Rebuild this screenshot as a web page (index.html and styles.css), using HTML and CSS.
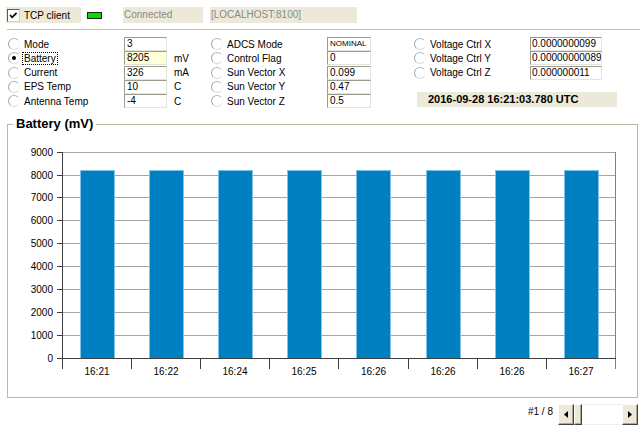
FILE: index.html
```html
<!DOCTYPE html>
<html>
<head>
<meta charset="utf-8">
<title>TCP client</title>
<link rel="stylesheet" href="styles.css">
</head>
<body>
<div class="topbar">
  <label class="chk-panel">
    <span class="chk"><svg width="11" height="11" viewBox="0 0 11 11"><polyline points="2,5 4.2,7.3 8.6,2.8" fill="none" stroke="#000" stroke-width="1.7"/></svg></span>
    <span class="chk-label">TCP client</span>
  </label>
  <span class="led"></span>
  <span class="status status-conn">Connected</span>
  <span class="status status-host">[LOCALHOST:8100]</span>
</div>
<div class="sep"></div>
<div class="fields">
  <div class="col col1">
    <div class="row"><span class="radio"></span><span class="lbl">Mode</span><span class="box w1">3</span></div>
    <div class="row"><span class="radio on"></span><span class="lbl"><span class="focus">Battery</span></span><span class="box w1 hl">8205</span><span class="unit">mV</span></div>
    <div class="row"><span class="radio"></span><span class="lbl">Current</span><span class="box w1">326</span><span class="unit">mA</span></div>
    <div class="row"><span class="radio"></span><span class="lbl">EPS Temp</span><span class="box w1">10</span><span class="unit">C</span></div>
    <div class="row"><span class="radio"></span><span class="lbl">Antenna Temp</span><span class="box w1">-4</span><span class="unit">C</span></div>
  </div>
  <div class="col col2">
    <div class="row"><span class="radio"></span><span class="lbl">ADCS Mode</span><span class="box w2 small">NOMINAL</span></div>
    <div class="row"><span class="radio"></span><span class="lbl">Control Flag</span><span class="box w2">0</span></div>
    <div class="row"><span class="radio"></span><span class="lbl">Sun Vector X</span><span class="box w2">0.099</span></div>
    <div class="row"><span class="radio"></span><span class="lbl">Sun Vector Y</span><span class="box w2">0.47</span></div>
    <div class="row"><span class="radio"></span><span class="lbl">Sun Vector Z</span><span class="box w2">0.5</span></div>
  </div>
  <div class="col col3">
    <div class="row"><span class="radio"></span><span class="lbl">Voltage Ctrl X</span><span class="box w3">0.0000000099</span></div>
    <div class="row"><span class="radio"></span><span class="lbl">Voltage Ctrl Y</span><span class="box w3">0.00000000089</span></div>
    <div class="row"><span class="radio"></span><span class="lbl">Voltage Ctrl Z</span><span class="box w3">0.000000011</span></div>
    <div class="stamp">2016-09-28 16:21:03.780 UTC</div>
  </div>
</div>
<fieldset class="group">
  <legend>Battery (mV)</legend>
  <svg class="chart" width="629" height="266" viewBox="8 131 629 266">
    <g class="grid">
      <line x1="62" y1="335.5" x2="616" y2="335.5"/>
      <line x1="62" y1="312.5" x2="616" y2="312.5"/>
      <line x1="62" y1="289.5" x2="616" y2="289.5"/>
      <line x1="62" y1="266.5" x2="616" y2="266.5"/>
      <line x1="62" y1="243.5" x2="616" y2="243.5"/>
      <line x1="62" y1="220.5" x2="616" y2="220.5"/>
      <line x1="62" y1="197.5" x2="616" y2="197.5"/>
      <line x1="62" y1="175.5" x2="616" y2="175.5"/>
      <line x1="62" y1="152.5" x2="616" y2="152.5"/>
    </g>
    <g class="bars">
      <rect x="80.5" y="170.5" width="34" height="188"/>
      <rect x="149.5" y="170.5" width="34" height="188"/>
      <rect x="218.5" y="170.5" width="34" height="188"/>
      <rect x="287.5" y="170.5" width="34" height="188"/>
      <rect x="356.5" y="170.5" width="34" height="188"/>
      <rect x="426.5" y="170.5" width="34" height="188"/>
      <rect x="495.5" y="170.5" width="34" height="188"/>
      <rect x="564.5" y="170.5" width="34" height="188"/>
    </g>
    <line class="edge" x1="615.5" y1="152" x2="615.5" y2="369"/>
    <g class="axis">
      <line x1="62.5" y1="152" x2="62.5" y2="369"/>
      <line x1="57" y1="358.5" x2="616" y2="358.5"/>
      <line x1="57" y1="335.5" x2="62" y2="335.5"/>
      <line x1="57" y1="312.5" x2="62" y2="312.5"/>
      <line x1="57" y1="289.5" x2="62" y2="289.5"/>
      <line x1="57" y1="266.5" x2="62" y2="266.5"/>
      <line x1="57" y1="243.5" x2="62" y2="243.5"/>
      <line x1="57" y1="220.5" x2="62" y2="220.5"/>
      <line x1="57" y1="197.5" x2="62" y2="197.5"/>
      <line x1="57" y1="175.5" x2="62" y2="175.5"/>
      <line x1="57" y1="152.5" x2="62" y2="152.5"/>
      <line x1="131.5" y1="358" x2="131.5" y2="369"/>
      <line x1="200.5" y1="358" x2="200.5" y2="369"/>
      <line x1="269.5" y1="358" x2="269.5" y2="369"/>
      <line x1="338.5" y1="358" x2="338.5" y2="369"/>
      <line x1="408.5" y1="358" x2="408.5" y2="369"/>
      <line x1="477.5" y1="358" x2="477.5" y2="369"/>
      <line x1="546.5" y1="358" x2="546.5" y2="369"/>
    </g>
    <g class="ylab">
      <text x="53" y="362">0</text>
      <text x="53" y="339">1000</text>
      <text x="53" y="316">2000</text>
      <text x="53" y="293">3000</text>
      <text x="53" y="270">4000</text>
      <text x="53" y="247">5000</text>
      <text x="53" y="224">6000</text>
      <text x="53" y="201">7000</text>
      <text x="53" y="179">8000</text>
      <text x="53" y="156">9000</text>
    </g>
    <g class="xlab">
      <text x="97" y="375">16:21</text>
      <text x="166" y="375">16:22</text>
      <text x="235" y="375">16:24</text>
      <text x="304" y="375">16:25</text>
      <text x="373.5" y="375">16:26</text>
      <text x="443" y="375">16:26</text>
      <text x="512" y="375">16:26</text>
      <text x="581" y="375">16:27</text>
    </g>
  </svg>
</fieldset>
<div class="footer">
  <span class="pager">#1 / 8</span>
  <div class="scroll">
    <span class="sbtn"><svg width="4" height="7" viewBox="0 0 4 7"><polygon points="4,0 0,3.5 4,7" fill="#000"/></svg></span>
    <span class="sbtn thumb"></span>
    <span class="track"></span>
    <span class="sbtn"><svg width="4" height="7" viewBox="0 0 4 7"><polygon points="0,0 4,3.5 0,7" fill="#000"/></svg></span>
  </div>
</div>
</body>
</html>
```
FILE: styles.css
```css
* { box-sizing: border-box; }
html, body { margin: 0; padding: 0; background: #fff; }
body {
  width: 640px;
  height: 429px;
  overflow: hidden;
  font-family: "Liberation Sans", Arial, sans-serif;
  font-size: 10px;
  color: #000;
}

/* top bar */
.topbar { display: flex; align-items: flex-start; height: 23px; padding: 7px 0 0 6px; }
.chk-panel { display: flex; align-items: center; width: 75px; height: 16px; background: #ECE9D8; padding-left: 1px; }
.chk {
  width: 13px; height: 13px; flex: none;
  border: 1px solid; border-color: #5a5a5a #d4d0c8 #d4d0c8 #5a5a5a;
  background: #fff; display: flex;
}
.chk svg { display: block; }
.chk-label { margin-left: 4px; }
.led { width: 15px; height: 7px; margin: 5px 0 0 6px; background: #00E000; border: 1px solid #1e1e1e; }
.status { height: 16px; line-height: 16px; background: #ECE9D8; color: #8a8a8a; padding-left: 1px; white-space: nowrap; }
.status-conn { width: 80px; margin-left: 21px; }
.status-host { width: 147px; margin-left: 7px; }
.sep { height: 1px; background: #c0c0c0; margin: 6px 0 0 7px; }

/* fields */
.fields { display: flex; height: 87px; padding: 7px 0 0 8px; }
.col { display: flex; flex-direction: column; }
.col1 { width: 203px; }
.col2 { width: 203px; }
.col3 { flex: 1; }
.row { display: flex; align-items: center; height: 14.25px; }
.radio {
  width: 12px; height: 12px; flex: none; margin-right: 4px;
  border-radius: 50%; border: 1px solid;
  border-color: #b4b4b4 #f6f6f6 #dcdcdc #a6a6a6;
  background: #fff;
  display: flex; align-items: center; justify-content: center;
}
.radio.on::after { content: ""; width: 4px; height: 4px; border-radius: 50%; background: #000; }
.lbl { width: 100px; white-space: nowrap; }
.focus { outline: 1px dotted #000; margin-left: -1px; padding: 0 1px; }
.box {
  height: 14px; line-height: 12px; padding: 0 2px;
  border: 1px solid; border-color: #9c9a8e #e6e4da #e6e4da #9c9a8e;
  background: #fff; white-space: nowrap; overflow: hidden;
}
.w1 { width: 43px; }
.w2 { width: 44px; }
.w3 { width: 72px; padding-left: 1px; }
.box.hl { background: #FFFFD9; }
.box.small { font-size: 8px; }
.unit { margin-left: 7px; }
.stamp {
  margin: 12px 0 0 3px; width: 200px; height: 15px; line-height: 15px;
  background: #ECE9D8; font-weight: bold; font-size: 11px; padding-left: 11px;
}

/* group box */
.group { margin: 0 2px 0 7px; padding: 0; border: 1px solid #bcb8a8; min-width: 0; }
.group legend { margin-left: 5px; padding: 0 3px; font-size: 13px; font-weight: bold; line-height: 14px; }
.chart { display: block; width: 629px; height: 266px; }
.chart .grid line { stroke: #a4a4a4; stroke-width: 1; }
.chart .bars rect { fill: #0080C0; stroke: #80c2ea; stroke-width: 1; }
.chart .edge { stroke: #808080; stroke-width: 1; }
.chart .axis line { stroke: #3c3c3c; stroke-width: 1; }
.chart text { font-family: "Liberation Sans", Arial, sans-serif; font-size: 10px; fill: #000; }
.chart .ylab text { text-anchor: end; }
.chart .xlab text { text-anchor: middle; }

/* footer */
.footer { display: flex; justify-content: flex-end; padding-right: 2px; margin-top: 6px; }
.pager { margin: 2px 5px 0 0; line-height: 12px; }
.scroll { display: flex; width: 80px; height: 21px; }
.sbtn {
  width: 16px; height: 21px; flex: none;
  background: #ECE9D8;
  border: 1px solid; border-color: #fff #404040 #404040 #fff;
  box-shadow: inset -1px -1px #aca899;
  display: flex; align-items: center; justify-content: center;
}
.sbtn svg { display: block; }
.thumb { width: 8px; }
.track { flex: 1; background: #fff; border-top: 1px solid #f0efe8; border-bottom: 1px solid #f0efe8; }
```
